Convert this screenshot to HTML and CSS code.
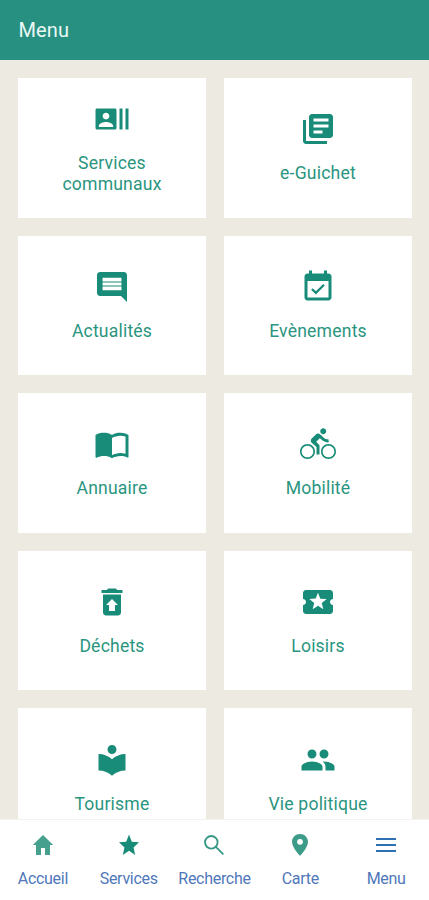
FILE: index.html
```html
<!DOCTYPE html>
<html lang="fr">
<head>
<meta charset="utf-8">
<meta name="viewport" content="width=device-width, initial-scale=1">
<title>Menu</title>
<link rel="stylesheet" href="styles.css">
</head>
<body>
<div class="app">
  <header class="topbar"><h1 class="topbar-title">Menu</h1></header>
  <main class="content">
    <div class="grid">
      <a class="card"><svg class="icon" viewBox="0 0 24 24"><path d="M21 5v14h2V5h-2zm-4 14h2V5h-2v14zM14 5H2c-.55 0-1 .45-1 1v12c0 .55.45 1 1 1h12c.55 0 1-.45 1-1V6c0-.55-.45-1-1-1zM8 7.750c1.240 0 2.250 1.010 2.250 2.250S9.240 12.250 8 12.250 5.750 11.240 5.750 10 6.760 7.750 8 7.750zM12.800 17.300H3.200v-.8c0-1.500 3.200-2.500 4.800-2.500s4.800 1 4.800 2.500z"/></svg><span class="label">Services communaux</span></a>
      <a class="card"><svg class="icon" viewBox="0 0 24 24"><path d="M4 6H2v14c0 1.100.9 2 2 2h14v-2H4V6zm16-4H8c-1.100 0-2 .9-2 2v12c0 1.100.9 2 2 2h12c1.100 0 2-.9 2-2V4c0-1.100-.9-2-2-2zm-1 9H9V9h10v2zm-4 4H9v-2h6v2zm4-8H9V5h10v2z"/></svg><span class="label">e-Guichet</span></a>
      <a class="card"><svg class="icon" viewBox="0 0 24 24"><path d="M21.990 4c0-1.100-.89-2-1.990-2H4c-1.100 0-2 .9-2 2v12c0 1.100.9 2 2 2h14l4 4-.01-18zM18.300 14.200H5.700v-2.500h12.600v2.500zm0-3.200H5.700V9h12.600v2zm0-2.700H5.700V5.800h12.600v2.500z"/></svg><span class="label">Actualités</span></a>
      <a class="card"><svg class="icon" viewBox="0 0 24 24"><path d="M16.530 11.060L15.470 10l-4.880 4.880-2.120-2.120-1.060 1.060L10.590 17l5.940-5.940zM19 3h-1V1h-2v2H8V1H6v2H5c-1.110 0-1.990.9-1.990 2L3 19c0 1.100.89 2 2 2h14c1.100 0 2-.9 2-2V5c0-1.100-.9-2-2-2zm0 16H5V8h14v11z"/></svg><span class="label">Evènements</span></a>
      <a class="card"><svg class="icon" viewBox="0 0 24 24"><path d="M21 5c-1.110-.35-2.330-.5-3.500-.5-1.950 0-4.050.4-5.500 1.500-1.450-1.100-3.550-1.500-5.500-1.500S2.450 4.900 1 6v14.650c0 .25.25.5.5.5.1 0 .15-.05.25-.05C3.100 20.450 5.050 20 6.500 20c1.950 0 4.050.4 5.500 1.500 1.350-.85 3.800-1.500 5.500-1.500 1.650 0 3.350.3 4.750 1.050.1.050.15.050.25.050.25 0 .5-.25.5-.5V6c-.6-.45-1.250-.75-2-1zm0 13.500c-1.100-.35-2.300-.5-3.500-.5-1.700 0-4.150.65-5.500 1.500V8c1.350-.85 3.800-1.500 5.500-1.500 1.200 0 2.400.15 3.500.5v11.500z"/></svg><span class="label">Annuaire</span></a>
      <a class="card"><svg class="icon" viewBox="0 0 24 24"><path d="M15.500 5.500c1.100 0 2-.9 2-2s-.9-2-2-2-2 .9-2 2 .9 2 2 2zM5 12c-2.800 0-5 2.200-5 5s2.200 5 5 5 5-2.200 5-5-2.200-5-5-5zm0 8.900c-2.150 0-3.900-1.750-3.900-3.900S2.850 13.100 5 13.100 8.900 14.850 8.900 17 7.150 20.900 5 20.900zm5.800-10.400l2.400-2.400.8.8c1.300 1.300 3 2.100 5.100 2.100V9c-1.500 0-2.700-.6-3.600-1.500l-1.900-1.900c-.5-.4-1-.6-1.600-.6s-1.100.2-1.400.6L7.800 8.400c-.4.4-.6.9-.6 1.400 0 .6.2 1.100.6 1.400L11 14v5h2v-6.200l-2.200-2.300zM19 12c-2.800 0-5 2.200-5 5s2.200 5 5 5 5-2.200 5-5-2.200-5-5-5zm0 8.900c-2.150 0-3.900-1.750-3.900-3.900s1.750-3.900 3.900-3.900 3.900 1.750 3.900 3.900-1.750 3.900-3.900 3.900z"/></svg><span class="label">Mobilité</span></a>
      <a class="card"><svg class="icon" viewBox="0 0 24 24"><path d="M19 4h-3.500l-1-1h-5l-1 1H5v2h14V4zM6 7v12c0 1.100.9 2 2 2h8c1.100 0 2-.9 2-2V7H6zm8 7v4h-4v-4H8l4-4 4 4h-2z"/></svg><span class="label">Déchets</span></a>
      <a class="card"><svg class="icon" viewBox="0 0 24 24"><path d="M20 12c0-1.100.9-2 2-2V6c0-1.100-.9-2-2-2H4c-1.100 0-1.990.9-1.990 2v4c1.100 0 1.990.9 1.990 2s-.89 2-2 2v4c0 1.100.9 2 2 2h16c1.100 0 2-.9 2-2v-4c-1.100 0-2-.9-2-2zm-4.420 4.800L12 14.500l-3.580 2.300 1.080-4.120-3.290-2.690 4.240-.25L12 5.800l1.540 3.950 4.240.25-3.290 2.690 1.090 4.110z"/></svg><span class="label">Loisirs</span></a>
      <a class="card"><svg class="icon" viewBox="0 0 24 24"><path d="M12 11.550C9.640 9.350 6.480 8 3 8v11c3.480 0 6.640 1.350 9 3.550 2.360-2.190 5.520-3.550 9-3.550V8c-3.480 0-6.640 1.350-9 3.550zM12 8c1.660 0 3-1.340 3-3s-1.340-3-3-3-3 1.340-3 3 1.340 3 3 3z"/></svg><span class="label">Tourisme</span></a>
      <a class="card"><svg class="icon" viewBox="0 0 24 24"><path d="M16 11c1.660 0 2.990-1.340 2.990-3S17.660 5 16 5c-1.660 0-3 1.340-3 3s1.340 3 3 3zm-8 0c1.660 0 2.990-1.340 2.990-3S9.660 5 8 5C6.340 5 5 6.340 5 8s1.340 3 3 3zm0 2c-2.330 0-7 1.170-7 3.500V19h14v-2.500c0-2.330-4.670-3.500-7-3.500zm8 0c-.29 0-.62.02-.97.05 1.160.84 1.970 1.970 1.970 3.450V19h6v-2.500c0-2.330-4.670-3.500-7-3.500z"/></svg><span class="label">Vie politique</span></a>
    </div>
  </main>
  <nav class="tabbar">
    <a class="tab"><svg class="tab-icon home" viewBox="0 0 24 24"><path d="M12 2L1.800 12H5v9.900h5V15h4v6.900h5V12h3.200z"/></svg><span>Accueil</span></a>
    <a class="tab"><svg class="tab-icon" viewBox="0 0 24 24"><path d="M12 17.770L18.180 22l-1.640-7.530L22 9.240l-7.190-.61L12 1.500 9.190 8.630 2 9.240l5.460 5.230L5.820 22z"/></svg><span>Services</span></a>
    <a class="tab"><svg class="tab-icon search" viewBox="0 0 24 24"><circle cx="9.300" cy="9.300" r="6.300"/><path d="M13.900 13.900l7.400 7.400"/></svg><span>Recherche</span></a>
    <a class="tab"><svg class="tab-icon pin" viewBox="0 0 24 24"><path d="M12 1c-4.420 0-8 3.480-8 7.800C4 14.800 12 23 12 23s8-8.200 8-14.200C20 4.480 16.420 1 12 1zm0 10.700a2.900 2.900 0 1 1 0-5.800 2.900 2.900 0 0 1 0 5.800z"/></svg><span>Carte</span></a>
    <a class="tab"><svg class="tab-icon bars" viewBox="0 0 24 24"><path d="M2 5h20v2H2zM2 11h20v2H2zM2 17h20v2H2z"/></svg><span>Menu</span></a>
  </nav>
</div>
</body>
</html>
```
FILE: styles.css
```css
* { box-sizing: border-box; }

body {
  margin: 0;
  font-family: Roboto, "Liberation Sans", sans-serif;
}

.app {
  display: flex;
  flex-direction: column;
  height: 900px;
  overflow: hidden;
  background: #edeae1;
}

.topbar {
  flex: 0 0 60.300px;
  display: flex;
  align-items: center;
  padding: 0 18.500px;
  background: #279080;
}

.topbar-title {
  margin: 0;
  font-size: 20px;
  font-weight: 400;
  letter-spacing: 0.1px;
  color: #e9faf5;
}

.content {
  flex: 1;
  min-height: 0;
  overflow: hidden;
  padding: 17.700px 17px 0 18px;
}

.grid {
  display: grid;
  grid-template-columns: 1fr 1fr;
  grid-auto-rows: 139.700px;
  gap: 17.900px 18px;
}

.card {
  display: flex;
  flex-direction: column;
  align-items: center;
  justify-content: center;
  gap: 16px;
  padding: 0 30px;
  background: #fff;
  color: #188c78;
}

.icon {
  flex: none;
  width: 36px;
  height: 36px;
  fill: currentColor;
}

.label {
  font-size: 17.600px;
  line-height: 21px;
  letter-spacing: 0.180px;
  text-align: center;
  color: #2a957f;
}

.tabbar {
  flex: 0 0 81px;
  display: grid;
  grid-template-columns: repeat(5, 1fr);
  border-top: 1px solid #f3f2ef;
  background: #fff;
}

.tab {
  display: flex;
  flex-direction: column;
  align-items: center;
  gap: 12px;
  padding-top: 13px;
  font-size: 16px;
  line-height: 19px;
  letter-spacing: -0.300px;
  color: #5078ba;
}

.tab-icon {
  width: 24px;
  height: 24px;
  fill: #188c78;
}

.home { fill: #45a08e; }

.pin { fill: #3c9c89; }

.search {
  fill: none;
  stroke: #369783;
  stroke-width: 1.800;
}

.bars { fill: #2f70b5; }
```
